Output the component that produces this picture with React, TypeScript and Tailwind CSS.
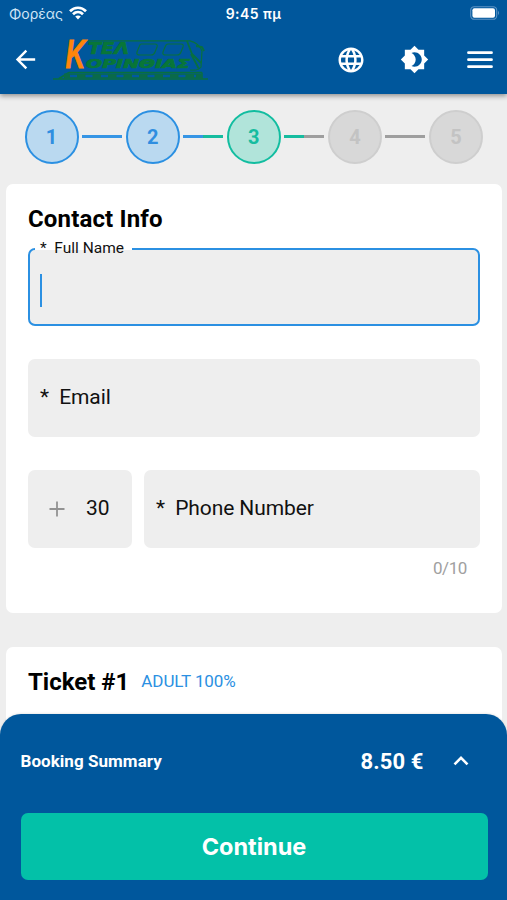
import { MdArrowBack, MdBrightness4, MdLanguage } from "react-icons/md";

function StatusBar() {
  return (
    <div className="grid h-7 grid-cols-3 items-center px-2 font-['Inter','Noto_Sans',sans-serif] text-[14px] text-white">
      <div className="flex items-center gap-[6px] pl-px">
        <span className="relative top-[-1px] text-[#cfe4f6]">Φορέας</span>
        <svg width="18" height="14" viewBox="0 0 18 14" fill="none" stroke="white" strokeWidth="2.7" className="relative top-[-1px]">
          <path d="M1 5.2C5.6.6 12.4.6 17 5.2" />
          <path d="M4 8.3C6.9 5.5 11.1 5.5 14 8.3" />
          <path d="M6.2 10.6C7.8 9 10.2 9 11.8 10.6L9 13.6Z" fill="white" stroke="none" />
        </svg>
      </div>
      <div className="text-center font-semibold tracking-[0.45px]"><span className="relative top-[-1px]">9:45 πμ</span></div>
      <div className="flex justify-end">
        <svg width="30" height="14" viewBox="0 0 30 14" className="relative top-[-1px] left-px">
          <rect x=".7" y=".7" width="26" height="12.6" rx="3.6" fill="none" stroke="#5c93c4" strokeWidth="1.1" />
          <rect x="2.4" y="2.3" width="22.6" height="9.4" rx="2" fill="white" />
          <path d="M28 4.8q2 2.2 0 4.4z" fill="#5c93c4" />
        </svg>
      </div>
    </div>
  );
}

function Logo() {
  return (
    <svg width="160" height="56" viewBox="50 32 160 56" fill="none" stroke="#08703f" strokeWidth="1.2">
      <path d="M82 40.8H190Q199 43 202 51L201 67Q198 71 190 70" />
      <path d="M141 44h14q3 0 2 3l-2 5q-1 3-4 3h-11q-4 0-3-3l2-5q1-3 2-3z" />
      <path d="M168 44h13q3 0 2 3l-2 5q-1 3-4 3h-11q-4 0-3-3l2-5q1-3 3-3z" />
      <path d="M187 41l5 13 9 9M191 54l8 15M196 46l6 1 2 4" strokeWidth="1.8" />
      <path d="M69 72.5H202M53 79H208M69 72.5l-10 6M202 72.5v6" strokeWidth="1.5" />
      <path d="M64 76H202" strokeWidth="5" stroke="#0a6a4a" />
      <path d="M70 76H196" strokeWidth="2.6" strokeDasharray="7 8.5" stroke="#0059a0" />
      <g fontFamily="DejaVu Sans, sans-serif" fontWeight="700" fontStyle="italic" fill="#087638" stroke="#087638" strokeWidth=".7">
        <text x="88" y="54" fontSize="16" textLength="41" lengthAdjust="spacingAndGlyphs">ΤΕΛ</text>
        <text x="86" y="67.8" fontSize="11.5" textLength="104" lengthAdjust="spacingAndGlyphs">ΟΡΙΝΘΙΑΣ</text>
      </g>
      <text x="65.5" y="68.3" fontFamily="Liberation Sans, sans-serif" fontSize="40" fontWeight="700" fontStyle="italic" fill="#ff850b" stroke="#ff850b" strokeWidth=".8" textLength="20" lengthAdjust="spacingAndGlyphs">Κ</text>
    </svg>
  );
}

function Header() {
  return (
    <header className="relative z-10 h-[94px] bg-[#00579c] text-white shadow-[0_2px_5px_rgba(0,0,0,0.4)]">
      <StatusBar />
      <div className="flex h-[63px] items-center pr-[13px] pl-[11px]">
        <MdArrowBack size={29} />
        <div className="ml-[10px]"><Logo /></div>
        <div className="ml-auto flex items-center">
          <MdLanguage size={30} />
          <MdBrightness4 size={29} className="ml-[34px]" />
          <svg width="28" height="20" viewBox="0 0 28 20" className="ml-[37.5px]" stroke="white" strokeWidth="2.8" strokeLinecap="round">
            <path d="M2.5 2.7H25.5M2.5 9.7H25.5M2.5 16.7H25.5" />
          </svg>
        </div>
      </div>
    </header>
  );
}

const steps = [
  { circle: "border-[#2b90e2] bg-[#bad9f0] text-[#2f8ee0]", line: "bg-[#3695e5]" },
  { circle: "border-[#2b90e2] bg-[#bad9f0] text-[#2f8ee0]", line: "bg-linear-to-r from-[#3695e5] from-50% to-[#16bc9f] to-50%" },
  { circle: "border-[#12bda0] bg-[#b1e4da] text-[#16bc9f]", line: "bg-linear-to-r from-[#16bc9f] from-50% to-[#9e9e9e] to-50%" },
  { circle: "border-[#cecece] bg-[#d8d8d8] text-[#c3c3c3]", line: "bg-[#9e9e9e]" },
  { circle: "border-[#cecece] bg-[#d8d8d8] text-[#c3c3c3]", line: "" },
];

function Stepper() {
  return (
    <div className="flex h-[90px] items-center justify-between pr-[24px] pl-[24.5px] pb-[5px]">
      {steps.map((s, i) => (
        <div key={i} className="contents">
          <div className={`flex size-[54px] items-center justify-center rounded-full border-2 text-[20px] font-bold ${s.circle}`}>{i + 1}</div>
          {s.line && <div className={`h-[3px] w-10 ${s.line}`} />}
        </div>
      ))}
    </div>
  );
}

export default function App() {
  return (
    <div className="flex h-[900px] w-[507px] flex-col overflow-hidden bg-[#eeeeee] font-['Roboto',sans-serif] text-[#111]">
      <Header />
      <Stepper />
      <section className="mr-[5px] ml-[6px] h-[429px] shrink-0 rounded-[7px] bg-white px-[22px] pt-[18px]">
        <h2 className="h-[46px] text-[24px] leading-[34px] font-bold tracking-[0.15px] text-black">Contact Info</h2>
        <div className="relative flex h-[78px] items-center rounded-[7px] border-2 border-[#2b90e2] bg-[#eeeeee] pl-[10px]">
          <span className="absolute top-[-11px] left-[5px] flex h-5 w-[97px] items-center bg-linear-to-b from-white from-55% to-[#eeeeee] to-55% pl-[5px] text-[15.5px] whitespace-pre">*  Full Name</span>
          <span className="mt-[6px] h-[33px] w-[2px] bg-[#2b90e2]" />
        </div>
        <div className="mt-[33px] flex h-[78px] items-center rounded-[7px] bg-[#eeeeee] pb-px pl-3 text-[21px] tracking-[-0.1px] whitespace-pre">*  Email</div>
        <div className="mt-[33px] flex gap-[12px]">
          <div className="flex h-[78px] w-[104px] items-center rounded-[7px] bg-[#eeeeee] pb-px pl-[21px] text-[21px]">
            <svg width="16" height="16" viewBox="0 0 16 16" className="mt-px mr-[21px]" stroke="#929292" strokeWidth="1.8"><path d="M8 .5V15.5M.5 8H15.5" /></svg>
            30
          </div>
          <div className="flex h-[78px] flex-1 items-center rounded-[7px] bg-[#eeeeee] pb-px pl-3 text-[21px] tracking-[-0.1px] whitespace-pre">*  Phone Number</div>
        </div>
        <div className="mt-[8px] pr-[13px] text-right text-[17px] leading-6 tracking-[-0.4px] text-[#a0a0a0]">0/10</div>
      </section>
      <section className="mr-[5px] ml-[6px] mt-[34px] flex h-[90px] shrink-0 items-start rounded-[7px] bg-white px-[22px] pt-[18px]">
        <h2 className="text-[24px] leading-[34px] font-bold text-black">Ticket #1</h2>
        <span className="ml-[12px] text-[17px] leading-[33px] tracking-[-0.1px] text-[#2b90e2]">ADULT 100%</span>
      </section>
      <footer className="relative z-10 mt-[-23px] h-[186px] shrink-0 rounded-t-[21px] bg-[#00579c] pr-[19.5px] pl-[20.5px] text-white shadow-[0_-1px_2px_rgba(0,0,0,0.08)]">
        <div className="flex h-[99px] items-center pb-[5px] font-bold">
          <span className="pt-px text-[17px] tracking-[0.05px]">Booking Summary</span>
          <span className="ml-auto text-[22px] tracking-[0.1px]">8.50 €</span>
          <svg width="16" height="12" viewBox="0 0 16 12" className="mr-[19px] ml-[29px]" fill="none" stroke="white" strokeWidth="2.6"><path d="M1.5 9.3L8 2.8L14.5 9.3" /></svg>
        </div>
        <button className="h-[67px] w-full rounded-[7px] bg-[#03c1a8] font-['Inter',sans-serif] text-[23.5px] font-bold">Continue</button>
      </footer>
    </div>
  );
}
